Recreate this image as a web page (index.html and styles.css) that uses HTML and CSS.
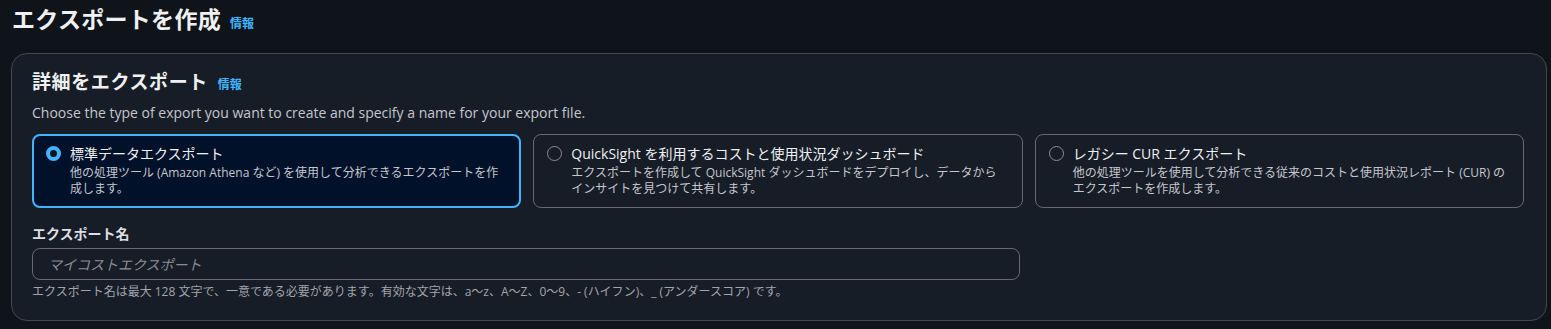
FILE: index.html
```html
<!DOCTYPE html>
<html lang="ja">
<head>
<meta charset="utf-8">
<title>エクスポートを作成</title>
<link rel="stylesheet" href="styles.css">
</head>
<body>
<div class="page">
  <div class="page-header">
    <h1 class="page-title">エクスポートを作成</h1>
    <a class="info-link">情報</a>
  </div>
  <section class="container">
    <div class="container-header">
      <h2 class="container-title">詳細をエクスポート</h2>
      <a class="info-link small">情報</a>
    </div>
    <p class="description">Choose the type of export you want to create and specify a name for your export file.</p>
    <div class="tiles">
      <div class="tile selected">
        <span class="radio checked"></span>
        <div class="tile-text">
          <div class="tile-title">標準データエクスポート</div>
          <div class="tile-desc">他の処理ツール (Amazon Athena など) を使用して分析できるエクスポートを作成します。</div>
        </div>
      </div>
      <div class="tile">
        <span class="radio"></span>
        <div class="tile-text">
          <div class="tile-title">QuickSight を利用するコストと使用状況ダッシュボード</div>
          <div class="tile-desc">エクスポートを作成して QuickSight ダッシュボードをデプロイし、データからインサイトを見つけて共有します。</div>
        </div>
      </div>
      <div class="tile">
        <span class="radio"></span>
        <div class="tile-text">
          <div class="tile-title">レガシー CUR エクスポート</div>
          <div class="tile-desc">他の処理ツールを使用して分析できる従来のコストと使用状況レポート (CUR) のエクスポートを作成します。</div>
        </div>
      </div>
    </div>
    <div class="field">
      <label class="field-label">エクスポート名</label>
      <input class="field-input" type="text" placeholder="マイコストエクスポート">
      <div class="field-help">エクスポート名は最大 128 文字で、一意である必要があります。有効な文字は、a～z、A～Z、0～9、- (ハイフン)、_ (アンダースコア) です。</div>
    </div>
  </section>
</div>
</body>
</html>
```
FILE: styles.css
```css
* { box-sizing: border-box; }
html, body {
  margin: 0;
  padding: 0;
  background: #0f141a;
  height: 100%;
}
body {
  font-family: "Open Sans", "Noto Sans CJK JP", sans-serif;
  color: #dedee3;
  font-size: 14px;
}
.page {
  padding: 3px 4px 0 11px;
}
.page-header {
  display: flex;
  align-items: baseline;
  gap: 9px;
  height: 39px;
  padding-left: 1px;
}
.page-title {
  margin: 0;
  font-size: 23px;
  font-weight: 700;
  line-height: 32px;
  letter-spacing: 0.3px;
  color: #f0f0f2;
}
.info-link {
  color: #42b4ff;
  font-size: 12px;
  font-weight: 700;
  cursor: pointer;
}
.container {
  margin-top: 11px;
  width: 1536px;
  background: #161d26;
  border: 1px solid #414853;
  border-radius: 16px;
  padding: 14px 22px 20px 20px;
}
.container-header {
  display: flex;
  align-items: baseline;
  gap: 10px;
  height: 31px;
}
.container-title {
  margin: 0;
  font-size: 19px;
  font-weight: 700;
  line-height: 28px;
  letter-spacing: 0.6px;
  color: #f0f0f2;
}
.description {
  margin: 4px 0 0 0;
  font-size: 14px;
  line-height: 20px;
  color: #c6c6cd;
}
.tiles {
  margin-top: 11px;
  display: grid;
  grid-template-columns: repeat(3, 1fr);
  gap: 12px;
}
.tile {
  display: flex;
  align-items: flex-start;
  gap: 9px;
  border: 1px solid #656871;
  border-radius: 8px;
  padding: 11px 17px 13px 13px;
  height: 74px;
}
.tile.selected {
  background: #001129;
  border: 2px solid #42b4ff;
  padding: 10px 16px 12px 12px;
}
.radio {
  flex: 0 0 auto;
  width: 15px;
  height: 15px;
  margin-top: 0;
  border-radius: 50%;
  border: 1.5px solid #8c8c94;
}
.radio.checked {
  border: 4px solid #42b4ff;
  background: #0f141a;
}
.tile-text { min-width: 0; }
.tile-title {
  font-size: 14px;
  line-height: 16px;
  color: #f0f0f2;
}
.tile-desc {
  margin-top: 3px;
  font-size: 12px;
  line-height: 16px;
  color: #c6c6cd;
}
.field {
  margin-top: 16px;
}
.field-label {
  display: block;
  font-size: 14px;
  font-weight: 700;
  line-height: 20px;
  color: #dedee3;
}
.field-input {
  display: block;
  margin-top: 4px;
  width: 988px;
  height: 32px;
  background: #161d26;
  border: 1px solid #656871;
  border-radius: 8px;
  padding: 0 15px;
  font-family: "Open Sans", "Noto Sans CJK JP", sans-serif;
  font-size: 14px;
  color: #dedee3;
  outline: none;
}
.field-input::placeholder {
  color: #8c8c94;
  font-style: italic;
}
.field-help {
  margin-top: 4px;
  font-size: 12px;
  line-height: 16px;
  color: #a4a4ad;
}
```
